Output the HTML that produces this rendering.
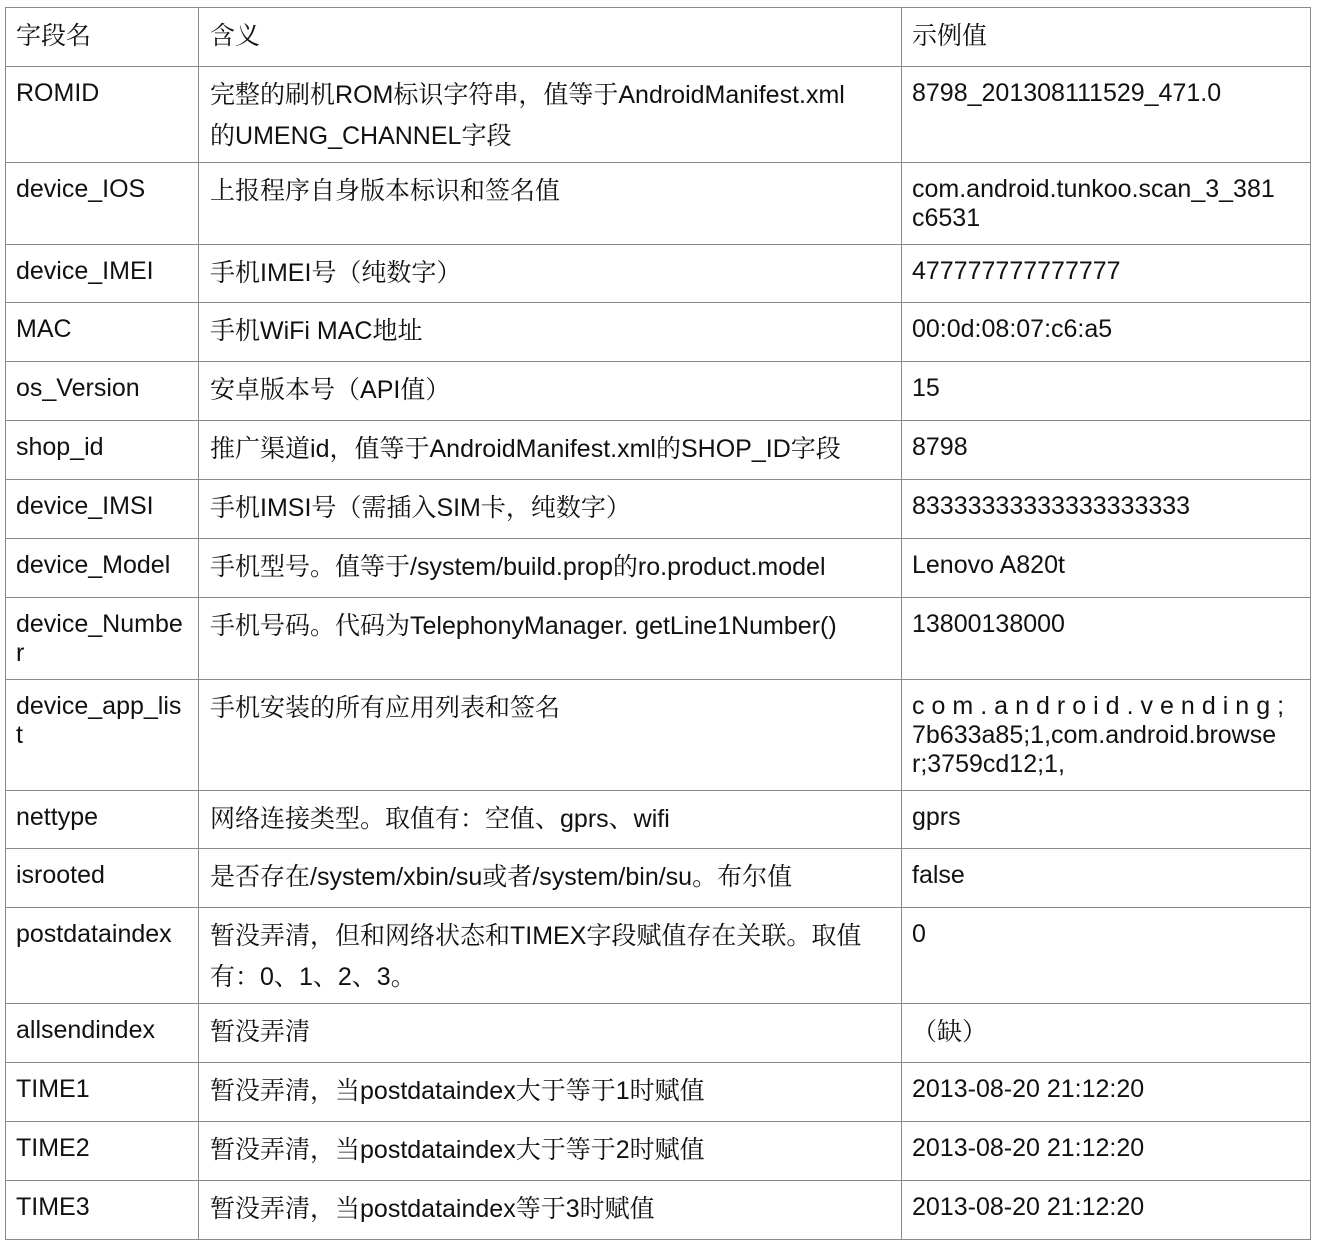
<!DOCTYPE html>
<html><head><meta charset="utf-8"><style>
body{margin:0;background:#fff;width:1318px;height:1244px;overflow:hidden}
table{position:absolute;left:5px;top:7px;border-collapse:collapse;table-layout:fixed;font-family:"Liberation Sans","Noto Serif CJK SC",sans-serif;font-size:25px;color:#111}
td{border:1.5px solid #8a8a8a;vertical-align:top;padding:12px 6px 0 10px;line-height:29px;white-space:nowrap;overflow:hidden}
td.m{padding-left:11px;line-height:39px;padding-top:7px}
td.v{padding-left:10px;padding-right:4px}
.c{font-family:"Noto Serif CJK SC","Noto Sans CJK SC",serif;font-size:25px}
</style></head><body>
<table>
<colgroup><col style="width:193px"><col style="width:703px"><col style="width:409px"></colgroup>
<tr style="height:59px"><td><span class="c">字段名</span></td><td class="m"><span class="c">含义</span></td><td class="v"><span class="c">示例值</span></td></tr>
<tr style="height:96px"><td>ROMID</td><td class="m"><span class="c">完整的刷机</span>ROM<span class="c">标识字符串，值等于</span>AndroidManifest.xml<br><span class="c">的</span>UMENG_CHANNEL<span class="c">字段</span></td><td class="v">8798_201308111529_471.0</td></tr>
<tr style="height:82px"><td>device_IOS</td><td class="m"><span class="c">上报程序自身版本标识和签名值</span></td><td class="v">com.android.tunkoo.scan_3_381<br>c6531</td></tr>
<tr style="height:58px"><td>device_IMEI</td><td class="m"><span class="c">手机</span>IMEI<span class="c">号（纯数字）</span></td><td class="v">477777777777777</td></tr>
<tr style="height:59px"><td>MAC</td><td class="m"><span class="c">手机</span>WiFi MAC<span class="c">地址</span></td><td class="v">00:0d:08:07:c6:a5</td></tr>
<tr style="height:59px"><td>os_Version</td><td class="m"><span class="c">安卓版本号（</span>API<span class="c">值）</span></td><td class="v">15</td></tr>
<tr style="height:59px"><td>shop_id</td><td class="m"><span class="c">推广渠道</span>id<span class="c">，值等于</span>AndroidManifest.xml<span class="c">的</span>SHOP_ID<span class="c">字段</span></td><td class="v">8798</td></tr>
<tr style="height:59px"><td>device_IMSI</td><td class="m"><span class="c">手机</span>IMSI<span class="c">号（需插入</span>SIM<span class="c">卡，纯数字）</span></td><td class="v">83333333333333333333</td></tr>
<tr style="height:59px"><td>device_Model</td><td class="m"><span class="c">手机型号。值等于</span>/system/build.prop<span class="c">的</span>ro.product.model</td><td class="v">Lenovo A820t</td></tr>
<tr style="height:82px"><td>device_Numbe<br>r</td><td class="m"><span class="c">手机号码。代码为</span>TelephonyManager. getLine1Number()</td><td class="v">13800138000</td></tr>
<tr style="height:111px"><td>device_app_lis<br>t</td><td class="m"><span class="c">手机安装的所有应用列表和签名</span></td><td class="v"><span style="letter-spacing:7px">com.android.vending;</span><br>7b633a85;1,com.android.browse<br>r;3759cd12;1,</td></tr>
<tr style="height:58px"><td>nettype</td><td class="m"><span class="c">网络连接类型。取值有：空值、</span>gprs<span class="c">、</span>wifi</td><td class="v">gprs</td></tr>
<tr style="height:59px"><td>isrooted</td><td class="m"><span class="c">是否存在</span>/system/xbin/su<span class="c">或者</span>/system/bin/su<span class="c">。布尔值</span></td><td class="v">false</td></tr>
<tr style="height:96px"><td>postdataindex</td><td class="m"><span class="c">暂没弄清，但和网络状态和</span>TIMEX<span class="c">字段赋值存在关联。取值</span><br><span class="c">有：</span>0<span class="c">、</span>1<span class="c">、</span>2<span class="c">、</span>3<span class="c">。</span></td><td class="v">0</td></tr>
<tr style="height:59px"><td>allsendindex</td><td class="m"><span class="c">暂没弄清</span></td><td class="v" style="padding-top:7px;line-height:39px"><span class="c">（缺）</span></td></tr>
<tr style="height:59px"><td>TIME1</td><td class="m"><span class="c">暂没弄清，当</span>postdataindex<span class="c">大于等于</span>1<span class="c">时赋值</span></td><td class="v">2013-08-20 21:12:20</td></tr>
<tr style="height:59px"><td>TIME2</td><td class="m"><span class="c">暂没弄清，当</span>postdataindex<span class="c">大于等于</span>2<span class="c">时赋值</span></td><td class="v">2013-08-20 21:12:20</td></tr>
<tr style="height:59px"><td>TIME3</td><td class="m"><span class="c">暂没弄清，当</span>postdataindex<span class="c">等于</span>3<span class="c">时赋值</span></td><td class="v">2013-08-20 21:12:20</td></tr>
</table>
</body></html>
